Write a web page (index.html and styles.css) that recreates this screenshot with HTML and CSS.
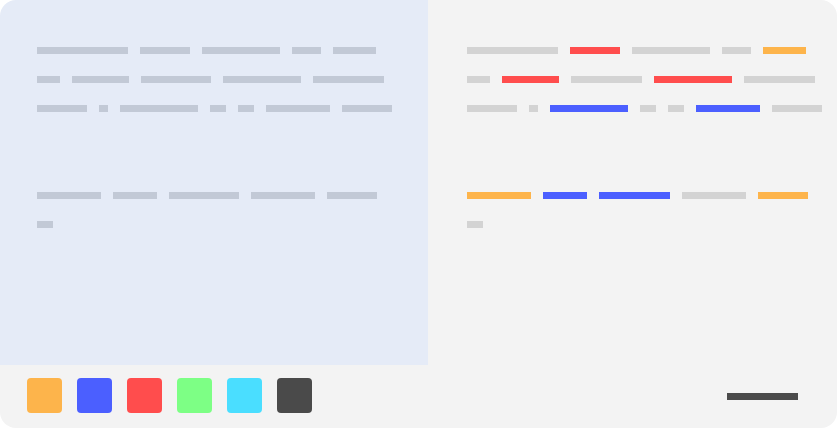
FILE: index.html
```html
<!DOCTYPE html>
<html>
<head>
<meta charset="utf-8">
<link rel="stylesheet" href="styles.css">
</head>
<body>
<div class="frame">
  <section class="pane pane-source">
    <div class="para">
      <div class="line"><span class="bar" style="width:91px"></span><span class="bar" style="width:50px"></span><span class="bar" style="width:78px"></span><span class="bar" style="width:29px"></span><span class="bar" style="width:43px"></span></div>
      <div class="line"><span class="bar" style="width:23px"></span><span class="bar" style="width:57px"></span><span class="bar" style="width:70px"></span><span class="bar" style="width:78px"></span><span class="bar" style="width:71px"></span></div>
      <div class="line"><span class="bar" style="width:50px"></span><span class="bar" style="width:9px"></span><span class="bar" style="width:78px"></span><span class="bar" style="width:16px"></span><span class="bar" style="width:16px"></span><span class="bar" style="width:64px"></span><span class="bar" style="width:50px"></span></div>
    </div>
    <div class="para">
      <div class="line"><span class="bar" style="width:64px"></span><span class="bar" style="width:44px"></span><span class="bar" style="width:70px"></span><span class="bar" style="width:64px"></span><span class="bar" style="width:50px"></span></div>
      <div class="line"><span class="bar" style="width:16px"></span></div>
    </div>
  </section>
  <section class="pane pane-target">
    <div class="para">
      <div class="line"><span class="bar" style="width:91px"></span><span class="bar red" style="width:50px"></span><span class="bar" style="width:78px"></span><span class="bar" style="width:29px"></span><span class="bar orange" style="width:43px"></span></div>
      <div class="line"><span class="bar" style="width:23px"></span><span class="bar red" style="width:57px"></span><span class="bar" style="width:71px"></span><span class="bar red" style="width:78px"></span><span class="bar" style="width:71px"></span></div>
      <div class="line"><span class="bar" style="width:50px"></span><span class="bar" style="width:9px"></span><span class="bar blue" style="width:78px"></span><span class="bar" style="width:16px"></span><span class="bar" style="width:16px"></span><span class="bar blue" style="width:64px"></span><span class="bar" style="width:50px"></span></div>
    </div>
    <div class="para">
      <div class="line"><span class="bar orange" style="width:64px"></span><span class="bar blue" style="width:44px"></span><span class="bar blue" style="width:71px"></span><span class="bar" style="width:64px"></span><span class="bar orange" style="width:50px"></span></div>
      <div class="line"><span class="bar" style="width:16px"></span></div>
    </div>
  </section>
  <footer class="toolbar">
    <div class="swatches">
      <span class="swatch orange"></span>
      <span class="swatch blue"></span>
      <span class="swatch red"></span>
      <span class="swatch green"></span>
      <span class="swatch cyan"></span>
      <span class="swatch dark"></span>
    </div>
    <span class="handle"></span>
  </footer>
</div>
</body>
</html>
```

FILE: styles.css
```css
html, body {
  margin: 0;
  padding: 0;
  background: #ffffff;
}

.frame {
  width: 837px;
  height: 428px;
  border-radius: 16px;
  overflow: hidden;
  display: grid;
  grid-template-columns: 428px 1fr;
  grid-template-rows: 365px 63px;
}

.pane {
  padding-top: 47px;
  box-sizing: border-box;
  display: flex;
  flex-direction: column;
  gap: 80px;
}

.pane-source {
  background: #e5ebf7;
  padding-left: 37px;
}

.pane-target {
  background: #f3f3f3;
  padding-left: 39px;
}

.para {
  display: flex;
  flex-direction: column;
  gap: 22px;
}

.line {
  display: flex;
  gap: 12px;
  height: 7px;
}

.bar {
  display: block;
  height: 7px;
  flex: none;
}

.pane-source .bar {
  background: #c2c9d6;
}

.pane-target .bar {
  background: #d3d3d3;
}

.pane-target .bar.red { background: #ff4d4d; }
.pane-target .bar.orange { background: #fdb44b; }
.pane-target .bar.blue { background: #4b5fff; }

.toolbar {
  grid-column: 1 / 3;
  background: #f3f3f3;
  display: flex;
  align-items: flex-start;
  justify-content: space-between;
  padding: 13px 39px 0 27px;
}

.swatches {
  display: flex;
  gap: 15px;
}

.swatch {
  display: block;
  width: 35px;
  height: 35px;
  border-radius: 4px;
}

.swatch.orange { background: #fdb44b; }
.swatch.blue { background: #4b5fff; }
.swatch.red { background: #ff4d4d; }
.swatch.green { background: #7dff85; }
.swatch.cyan { background: #4adeff; }
.swatch.dark { background: #4a4a4a; }

.handle {
  display: block;
  width: 71px;
  height: 7px;
  background: #4a4a4a;
  margin-top: 15px;
}
```
